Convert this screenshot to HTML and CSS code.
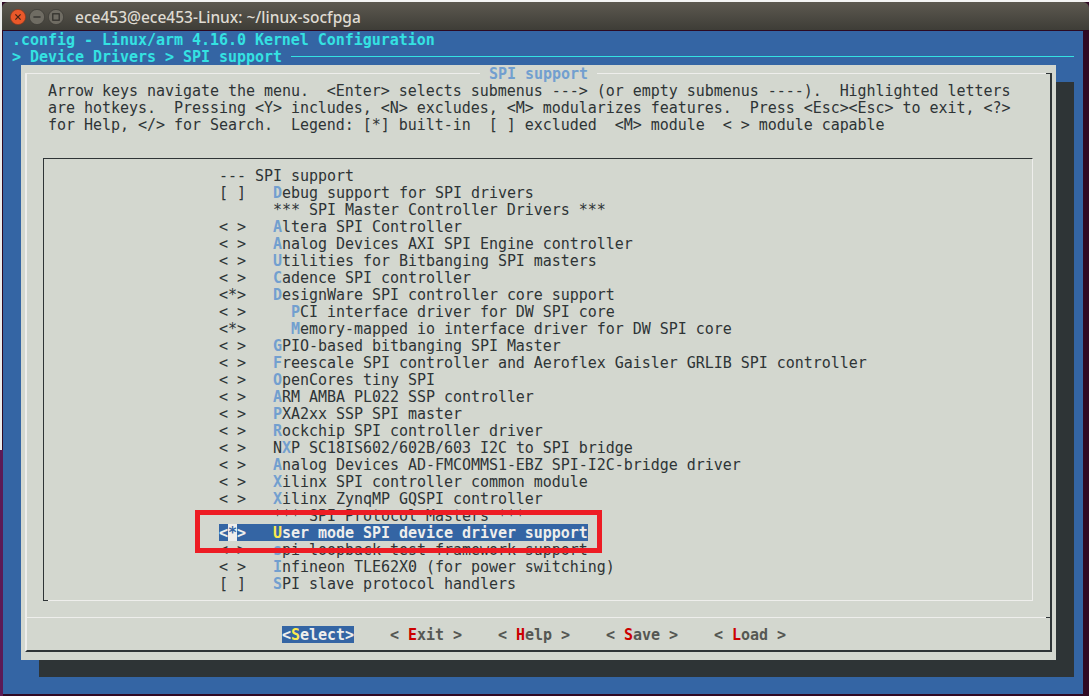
FILE: index.html
```html
<!DOCTYPE html>
<html lang="en">
<head>
<meta charset="utf-8">
<title>ece453@ece453-Linux: ~/linux-socfpga</title>
<link rel="stylesheet" href="styles.css">
</head>
<body>
<div class="edge"></div>
<div class="window">
  <header class="titlebar">
    <div class="controls">
      <svg class="ctl" width="16" height="16" viewBox="0 0 16 16"><circle cx="8" cy="8" r="7.6" fill="#e9582a" stroke="#8f3a1c" stroke-width=".7"/><path d="M5.4 5.4l5.2 5.2M10.6 5.4l-5.2 5.2" stroke="#4a2214" stroke-width="1.3" fill="none"/></svg>
      <svg class="ctl" width="16" height="16" viewBox="0 0 16 16"><circle cx="8" cy="8" r="7.6" fill="#6f6c63" stroke="#3c3b36" stroke-width=".7"/><path d="M4.4 8h7.2" stroke="#2f2e2a" stroke-width="1.3" fill="none"/></svg>
      <svg class="ctl" width="16" height="16" viewBox="0 0 16 16"><circle cx="8" cy="8" r="7.6" fill="#6f6c63" stroke="#3c3b36" stroke-width=".7"/><rect x="4.8" y="4.8" width="6.4" height="6.4" stroke="#2f2e2a" stroke-width="1.2" fill="none"/></svg>
    </div>
    <span class="wintitle">ece453@ece453-Linux: ~/linux-socfpga</span>
  </header>
  <main class="term">
    <div class="head">.config - Linux/arm 4.16.0 Kernel Configuration</div>
    <div class="head crumb"><span>&gt; Device Drivers &gt; SPI support</span><i class="rule"></i></div>
    <section class="dialog">
      <div class="frame">
        <span class="tick-top"></span>
        <span class="tick-mid"></span>
        <h1 class="dtitle">SPI support</h1>
        <div class="help">Arrow keys navigate the menu.  &lt;Enter&gt; selects submenus ---&gt; (or empty submenus ----).  Highlighted letters
are hotkeys.  Pressing &lt;Y&gt; includes, &lt;N&gt; excludes, &lt;M&gt; modularizes features.  Press &lt;Esc&gt;&lt;Esc&gt; to exit, &lt;?&gt;
for Help, &lt;/&gt; for Search.  Legend: [*] built-in  [ ] excluded  &lt;M&gt; module  &lt; &gt; module capable</div>
        <div class="list">
          <span class="tick-bl"></span>
          <div class="row">--- SPI support</div>
          <div class="row">[ ]   <b>D</b>ebug support for SPI drivers</div>
          <div class="row">      *** SPI Master Controller Drivers ***</div>
          <div class="row">&lt; &gt;   <b>A</b>ltera SPI Controller</div>
          <div class="row">&lt; &gt;   <b>A</b>nalog Devices AXI SPI Engine controller</div>
          <div class="row">&lt; &gt;   <b>U</b>tilities for Bitbanging SPI masters</div>
          <div class="row">&lt; &gt;   <b>C</b>adence SPI controller</div>
          <div class="row">&lt;*&gt;   <b>D</b>esignWare SPI controller core support</div>
          <div class="row">&lt; &gt;     <b>P</b>CI interface driver for DW SPI core</div>
          <div class="row">&lt;*&gt;     <b>M</b>emory-mapped io interface driver for DW SPI core</div>
          <div class="row">&lt; &gt;   <b>G</b>PIO-based bitbanging SPI Master</div>
          <div class="row">&lt; &gt;   <b>F</b>reescale SPI controller and Aeroflex Gaisler GRLIB SPI controller</div>
          <div class="row">&lt; &gt;   <b>O</b>penCores tiny SPI</div>
          <div class="row">&lt; &gt;   <b>A</b>RM AMBA PL022 SSP controller</div>
          <div class="row">&lt; &gt;   <b>P</b>XA2xx SSP SPI master</div>
          <div class="row">&lt; &gt;   <b>R</b>ockchip SPI controller driver</div>
          <div class="row">&lt; &gt;   N<b>X</b>P SC18IS602/602B/603 I2C to SPI bridge</div>
          <div class="row">&lt; &gt;   <b>A</b>nalog Devices AD-FMCOMMS1-EBZ SPI-I2C-bridge driver</div>
          <div class="row">&lt; &gt;   <b>X</b>ilinx SPI controller common module</div>
          <div class="row">&lt; &gt;   <b>X</b>ilinx ZynqMP GQSPI controller</div>
          <div class="row">      *** SPI Protocol Masters ***</div>
          <div class="row selected">&lt;<em>*</em>&gt;   <b>U</b>ser mode SPI device driver support</div>
          <div class="row">&lt; &gt;   <b>s</b>pi loopback test framework support</div>
          <div class="row">&lt; &gt;   <b>I</b>nfineon TLE62X0 (for power switching)</div>
          <div class="row">[ ]   <b>S</b>PI slave protocol handlers</div>
        </div>
        <nav class="footer">
          <span class="btn active">&lt;<b>S</b>elect&gt;</span>
          <span class="btn">&lt; <b>E</b>xit &gt;</span>
          <span class="btn">&lt; <b>H</b>elp &gt;</span>
          <span class="btn">&lt; <b>S</b>ave &gt;</span>
          <span class="btn">&lt; <b>L</b>oad &gt;</span>
        </nav>
      </div>
    </section>
  </main>
</div>
<div class="callout"></div>
</body>
</html>
```

FILE: styles.css
```css
* { box-sizing: border-box; }
html, body { margin: 0; padding: 0; }
body {
  position: relative;
  width: 1089px;
  height: 696px;
  overflow: hidden;
  background: #300a24;
  font: 15px/17px "DejaVu Sans Mono", "Liberation Mono", monospace;
  letter-spacing: -0.035px;
  color: #2e3436;
}
.edge {
  position: absolute;
  left: 0;
  top: 0;
  width: 3px;
  height: 696px;
  background: linear-gradient(to bottom, transparent 450px, #5c1a55 450px);
}
.window { padding: 2px 0 0 2px; }
body::before {
  content: "";
  position: absolute;
  left: 0;
  top: 0;
  width: 1089px;
  height: 2px;
  background: #f4f4f4;
}
body::after {
  content: "";
  position: absolute;
  left: 0;
  top: 0;
  width: 2px;
  height: 450px;
  background: #ececec;
}
.titlebar {
  display: flex;
  align-items: center;
  height: 29px;
  background: linear-gradient(to bottom, #5d5950, #3e3d37);
  border-bottom: 1px solid #2c0a22;
  border-radius: 6px 6px 0 0;
  padding-left: 8px;
}
.controls { display: flex; gap: 3px; padding-top: 1px; }
.ctl { display: block; }
.wintitle {
  margin: 2px 0 0 11px;
  font: 500 15.5px/20px "Noto Sans", sans-serif;
  letter-spacing: 0;
  color: #dfdbd2;
}
.term {
  margin-left: 1px;
  width: 1080px;
  height: 663px;
  padding-left: 9px;
  background: #3465a4;
}
.head { height: 17px; line-height: 19px; color: #34e2e2; font-weight: 700; white-space: pre; }
.crumb { display: flex; align-items: flex-start; }
.rule {
  display: block;
  width: 783px;
  height: 1px;
  margin: 8px 0 0 9px;
  background: #34e2e2;
}
.dialog {
  width: 1035px;
  height: 595px;
  margin: 0 0 0 9px;
  padding: 8px 4px;
  background: #d3d7cf;
  box-shadow: 18px 17px 0 #2e3436;
}
.frame {
  position: relative;
  height: 579px;
  border-style: solid;
  border-width: 1px 2px 2px 2px;
  border-color: #eeeeec #2e3436 #2e3436 #eeeeec;
  padding-top: 8px;
}
.tick-top {
  position: absolute;
  right: -2px;
  top: -1px;
  width: 6px;
  height: 1px;
  background: #2e3436;
}
.tick-mid {
  position: absolute;
  right: -2px;
  top: 543px;
  width: 6px;
  height: 1px;
  background: #2e3436;
}
.dtitle {
  position: absolute;
  left: 453px;
  top: -9px;
  height: 17px;
  margin: 0;
  padding: 0 9px;
  font: 700 15px/19px "DejaVu Sans Mono", monospace;
  color: #729fcf;
  background: #d3d7cf;
}
.help {
  padding: 1px 0 0 21px;
  white-space: pre;
}
.list {
  position: relative;
  margin: 24px 17px 0 16px;
  padding: 8px 0 8px 175px;
  border-style: solid;
  border-width: 1px 1px 1px 1px;
  border-color: #2e3436 #eeeeec #eeeeec #2e3436;
}
.tick-bl {
  position: absolute;
  left: -1px;
  bottom: -1px;
  width: 5px;
  height: 1px;
  background: #2e3436;
}
.row { height: 17px; line-height: 19px; white-space: pre; }
.row b { color: #729fcf; font-weight: 700; }
.selected {
  width: fit-content;
  background: #3465a4;
  color: #eeeeec;
  font-weight: 700;
}
.selected em {
  display: inline-block;
  height: 17px;
  font-style: normal;
  background: #eeeeec;
  color: #3465a4;
}
.selected b { color: #fce94f; }
.footer {
  display: flex;
  gap: 36px;
  margin-top: 16px;
  padding: 8px 0 8px 255px;
  border-top: 1px solid #eeeeec;
}
.btn { height: 17px; line-height: 19px; white-space: pre; font-weight: 700; color: #555753; }
.btn b { color: #cc0000; }
.btn.active { background: #3465a4; color: #eeeeec; }
.btn.active b { color: #fce94f; }
.callout {
  position: absolute;
  left: 195px;
  top: 510px;
  width: 407px;
  height: 43px;
  border: 5px solid #ed1c24;
}
```
